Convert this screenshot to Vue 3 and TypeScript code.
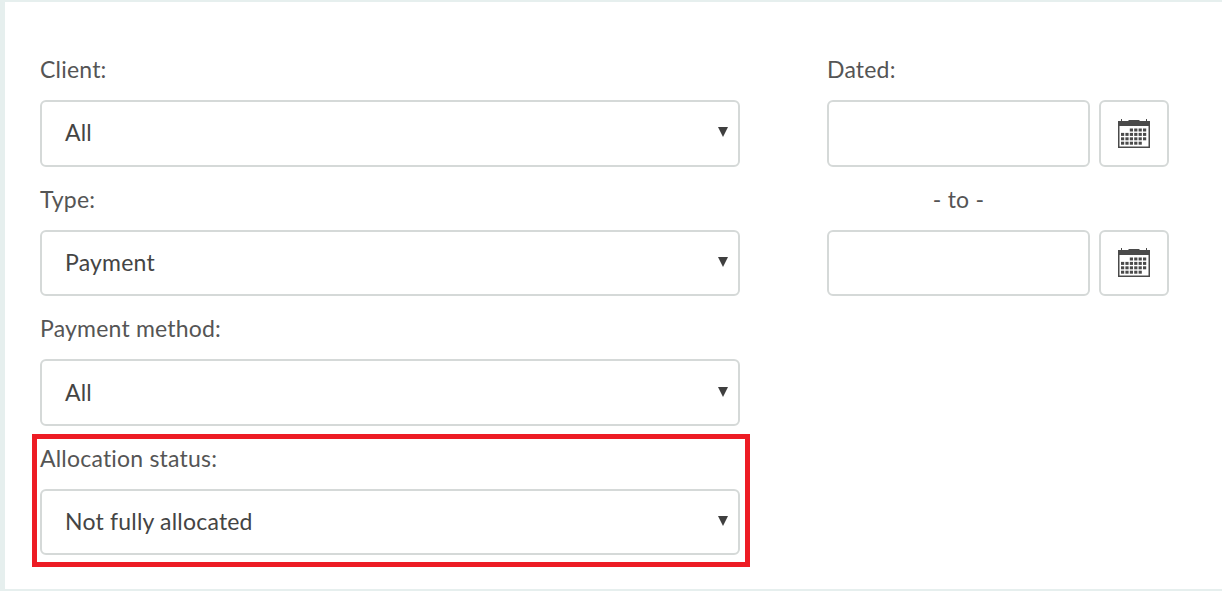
<script setup lang="ts">
interface Filter {
  label: string;
  value: string;
  highlight?: boolean;
}

const filters: Filter[] = [
  { label: 'Client:', value: 'All' },
  { label: 'Type:', value: 'Payment' },
  { label: 'Payment method:', value: 'All' },
  { label: 'Allocation status:', value: 'Not fully allocated', highlight: true },
];

// dots of the calendar grid, top row starts further right
const dots: { x: number; y: number }[] = [];
for (let r = 0; r < 4; r++) {
  for (let c = 0; c < 6; c++) {
    if (r === 0 && c < 2) continue;
    if (r === 3 && c > 4) continue;
    dots.push({ x: 3 + c * 4.4, y: 9.5 + r * 4.4 });
  }
}
</script>

<template>
  <div class="page">
    <div class="panel">
      <div class="col-left">
        <div v-for="f in filters" :key="f.label" class="field" :class="{ marked: f.highlight }">
          <label class="lbl">{{ f.label }}</label>
          <div class="select">
            <span>{{ f.value }}</span>
            <svg class="caret" width="10" height="10" viewBox="0 0 10 10"><path d="M0 0h10L5 10z" fill="#3f3f3f" /></svg>
          </div>
        </div>
      </div>
      <div class="col-right">
        <label class="lbl">Dated:</label>
        <div class="date-row">
          <div class="input"></div>
          <button class="cal" type="button">
            <svg width="32" height="29" viewBox="0 0 32 29">
              <path d="M0 2h3V0h1v2h6l1-1h10l1 1h6V0h1v2h3v27H0z" fill="#4a4a4a" />
              <rect x="1.5" y="7" width="29" height="20.5" fill="#fff" />
              <rect v-for="(d, i) in dots" :key="i" :x="d.x" :y="d.y" width="3.2" height="3" fill="#4a4a4a" />
            </svg>
          </button>
        </div>
        <div class="to">- to -</div>
        <div class="date-row">
          <div class="input"></div>
          <button class="cal" type="button">
            <svg width="32" height="29" viewBox="0 0 32 29">
              <path d="M0 2h3V0h1v2h6l1-1h10l1 1h6V0h1v2h3v27H0z" fill="#4a4a4a" />
              <rect x="1.5" y="7" width="29" height="20.5" fill="#fff" />
              <rect v-for="(d, i) in dots" :key="i" :x="d.x" :y="d.y" width="3.2" height="3" fill="#4a4a4a" />
            </svg>
          </button>
        </div>
      </div>
    </div>
  </div>
</template>

<style>
html, body {
  margin: 0;
  background: #e6efee;
}
</style>

<style scoped>
.page {
  height: 591px;
  padding: 2px 0 2px 5px;
  box-sizing: border-box;
  overflow: hidden;
  font-family: Lato, "Open Sans", sans-serif;
  font-variant-ligatures: none;
  letter-spacing: 0.2px;
  color: #4a4a4a;
}
.panel {
  height: 100%;
  background: #fff;
  padding-top: 35px;
  padding-left: 35px;
  display: flex;
  gap: 87px;
  box-sizing: border-box;
}
.col-left {
  width: 700px;
  display: flex;
  flex-direction: column;
}
.col-right {
  width: 342px;
}
.field {
  position: relative;
}
.marked::after {
  content: "";
  position: absolute;
  left: -8px;
  right: -10px;
  top: 8px;
  bottom: -12px;
  border: 5px solid #ed1c24;
  pointer-events: none;
}
.lbl {
  display: block;
  font-size: 23px;
  line-height: 64px;
  height: 63.2px;
  color: #555;
}
.select {
  height: 66.4px;
  box-sizing: border-box;
  border: 2px solid #d5d9d8;
  border-radius: 6px;
  padding: 0 10px 2px 23px;
  display: flex;
  align-items: center;
  justify-content: space-between;
  font-size: 23px;
  color: #444;
}
.caret {
  flex: none;
}
.date-row {
  display: flex;
  gap: 9px;
}
.input {
  width: 263px;
  height: 66.4px;
  box-sizing: border-box;
  border: 2px solid #d5d9d8;
  border-radius: 6px;
}
.cal {
  width: 70px;
  height: 66.4px;
  box-sizing: border-box;
  border: 2px solid #d5d9d8;
  border-radius: 6px;
  background: #fff;
  padding: 0;
  display: flex;
  align-items: center;
  justify-content: center;
}
.to {
  width: 263px;
  height: 63.2px;
  line-height: 64px;
  text-align: center;
  font-size: 23px;
  color: #555;
}
</style>
